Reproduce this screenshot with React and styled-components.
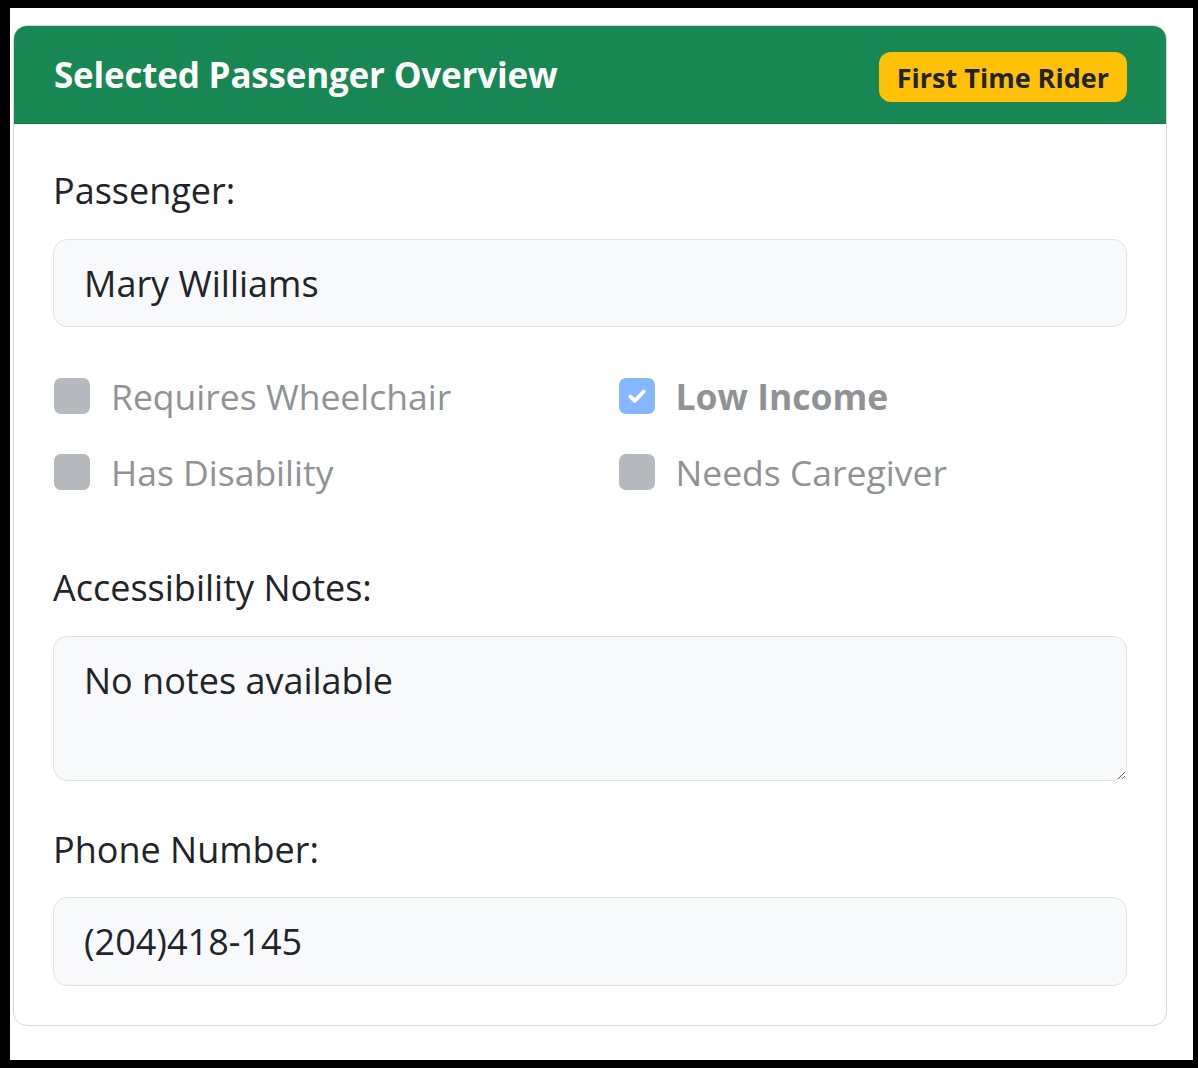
import React from 'react'
import styled, { createGlobalStyle } from 'styled-components'

const Global = createGlobalStyle`
    html, body {
        margin:0;
        padding:0;
        background:#fff;
    }
    * {
        box-sizing:border-box;
    }
`

// Styled Components
const Frame = styled.div`
    width:1198px;
    height:1068px;
    border-style:solid;
    border-color:#000;
    border-width:8px 5px 8px 10px;
    padding:17px 26px 0 3px;
    background:#fff;
    font-family:"Segoe UI", "Open Sans", "Noto Sans", sans-serif;
    color:#212529;
`
const Card = styled.div`
    border:1px solid #d6d8da;
    border-radius:14px;
    background:#fff;
    overflow:hidden;
`
const Header = styled.div`
    height:98px;
    display:flex;
    align-items:center;
    justify-content:space-between;
    padding:0 39px 0 40px;
    background-color:#198754;
    border-bottom:1px solid #157347;
`
const Title = styled.h5`
    margin:0;
    font-size:35px;
    font-weight:700;
    line-height:1.2;
    color:#fff;
    letter-spacing:-0.2px;
`
const Badge = styled.span`
    display:inline-flex;
    align-items:center;
    height:50px;
    margin-top:5px;
    padding:0 18px;
    border-radius:12px;
    background-color:#ffc107;
    color:#212529;
    font-size:27px;
    font-weight:700;
`
const Body = styled.div`
    padding:40px 39px 39px;
`
const Label = styled.label`
    display:block;
    font-size:36px;
    line-height:54px;
    margin-top:${p => p.$top || 0}px;
    margin-bottom:${p => p.$bottom || 21}px;
`
const Field = styled.div`
    height:${p => p.$height || 88}px;
    padding:17px 30px 15px;
    border:1px solid #dee2e6;
    border-radius:14px;
    background-color:#f8f9fa;
    font-size:36px;
    line-height:54px;
    color:#212529;
`
const Area = styled.textarea`
    display:block;
    width:100%;
    height:145px;
    padding:17px 30px 15px;
    border:1px solid #dee2e6;
    border-radius:14px;
    background-color:#f8f9fa;
    font-family:inherit;
    font-size:36px;
    line-height:54px;
    color:#212529;
    resize:vertical;
    outline:none;
`
const Checks = styled.div`
    display:grid;
    grid-template-columns:1fr 1fr;
    column-gap:55px;
    row-gap:22px;
    margin-top:42px;
`
const Check = styled.div`
    display:flex;
    align-items:center;
    gap:21px;
    height:54px;
    font-size:35.5px;
    font-weight:${p => p.$checked ? 700 : 400};
    color:#909396;
`
const Box = styled.span`
    flex:none;
    display:flex;
    align-items:center;
    justify-content:center;
    width:36px;
    height:36px;
    margin-left:1px;
    border-radius:7px;
    background-color:${p => p.$checked ? '#86b7fe' : '#b6b9bd'};
`

const options = [
    { label: 'Requires Wheelchair', checked: false },
    { label: 'Low Income', checked: true },
    { label: 'Has Disability', checked: false },
    { label: 'Needs Caregiver', checked: false }
]

export default () => {
    return (
        <Frame>
            <Global />
            <Card>
                <Header>
                    <Title>Selected Passenger Overview</Title>
                    <Badge>First Time Rider</Badge>
                </Header>
                <Body>
                    <Label>Passenger:</Label>
                    <Field>Mary Williams</Field>
                    <Checks>
                        {options.map(({ label, checked }, index) => (
                            <Check key={index} $checked={checked}>
                                <Box $checked={checked}>
                                    {checked && (
                                        <svg width="30" height="30" viewBox="0 0 20 20">
                                            <path
                                                d="M5.5 10.3l3 3L14.5 7"
                                                fill="none"
                                                stroke="#fff"
                                                strokeWidth="2.6"
                                                strokeLinecap="round"
                                                strokeLinejoin="round"
                                            />
                                        </svg>
                                    )}
                                </Box>
                                {label}
                            </Check>
                        ))}
                    </Checks>
                    <Label $top={62}>Accessibility Notes:</Label>
                    <Area readOnly defaultValue="No notes available" />
                    <Label $top={42} $bottom={20}>Phone Number:</Label>
                    <Field $height={89}>(204)418-145</Field>
                </Body>
            </Card>
        </Frame>
    )
}
